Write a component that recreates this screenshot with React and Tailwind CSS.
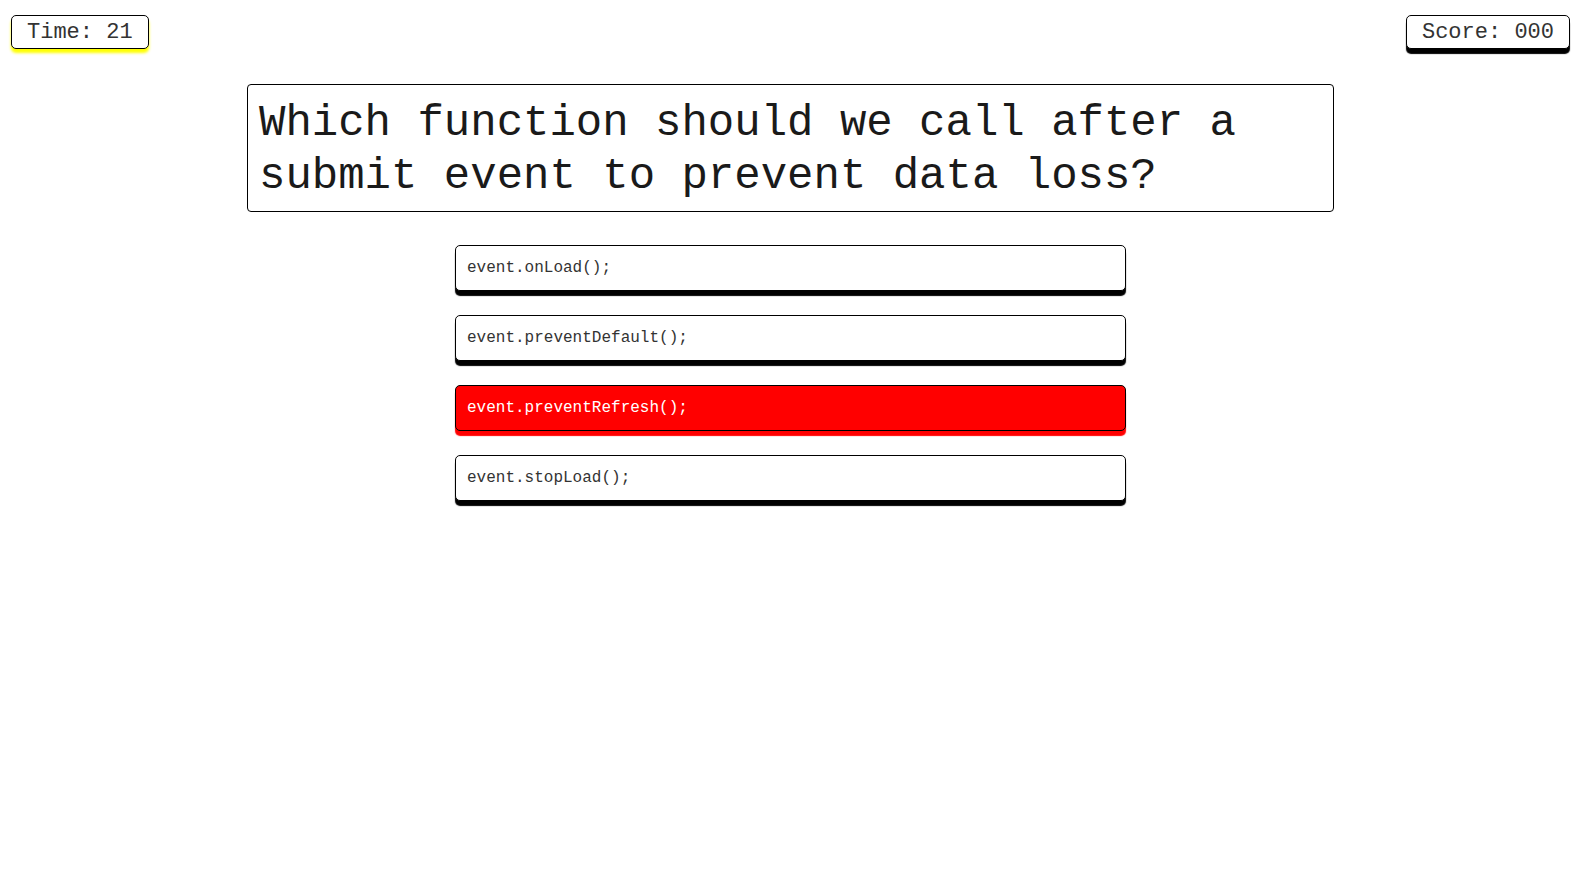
import React from 'react';

const answers = [
  { text: 'event.onLoad();', wrong: false },
  { text: 'event.preventDefault();', wrong: false },
  { text: 'event.preventRefresh();', wrong: true },
  { text: 'event.stopLoad();', wrong: false },
];

export default function App() {
  return (
    <div className="min-h-screen bg-white text-black font-['Liberation_Mono','Courier_New',monospace]">
      {/* Header */}
      <div className="flex justify-between px-[11px] pt-[15px]">
        <div className="h-[34px] flex items-center px-[15px] border border-black rounded-[5px] bg-white text-[22px] text-[#333] shadow-[0_4px_3px_#ffff00]">
          Time: 21
        </div>
        <div className="h-[34px] flex items-center px-[15px] border border-black rounded-[5px] bg-white text-[22px] text-[#333] shadow-[0_5px_1px_#000]">
          Score: 000
        </div>
      </div>

      {/* Question */}
      <div className="w-[1087px] mx-auto mt-[35px] border border-black rounded-[4px] pl-[11px] pr-[10px] pt-[12px] pb-[9px]">
        <h1 className="text-[44px] leading-[52.5px] font-normal text-[#1a1a1a]">
          Which function should we call after a submit event to prevent data loss?
        </h1>
      </div>

      {/* Answers */}
      <div className="w-[671px] mx-auto mt-[33px] flex flex-col gap-[24px]">
        {answers.map((a) => (
          <button
            key={a.text}
            className={`h-[46px] w-full text-left px-[11px] text-[16px] border border-black rounded-[5px] ${
              a.wrong
                ? 'bg-[#ff0000] text-white shadow-[0_5px_1px_#ff0000]'
                : 'bg-white text-[#333] shadow-[0_5px_1px_#000]'
            }`}
          >
            {a.text}
          </button>
        ))}
      </div>
    </div>
  );
}
